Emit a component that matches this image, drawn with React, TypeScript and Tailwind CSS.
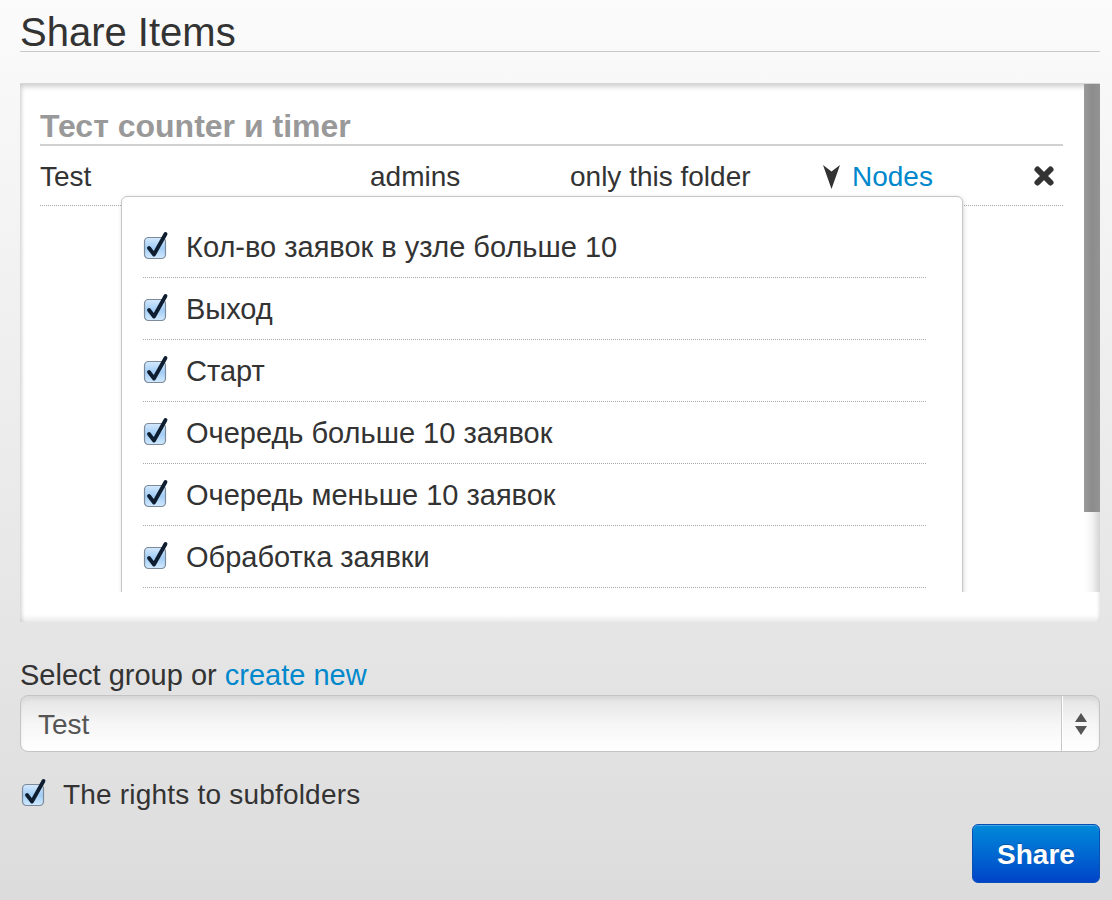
import React from "react";

const font = { fontFamily: '"Liberation Sans", Arial, sans-serif' };

function Check({ className = "" }: { className?: string }) {
  return (
    <svg width="27" height="31" viewBox="0 0 27 31" className={className}>
      <defs>
        <linearGradient id="cbg" x1="0" y1="0" x2="0" y2="1">
          <stop offset="0" stopColor="#d4e9fd" />
          <stop offset="0.5" stopColor="#a2cdf6" />
          <stop offset="1" stopColor="#d2eaff" />
        </linearGradient>
      </defs>
      <rect x="1.5" y="7.5" width="21" height="21" rx="4" fill="url(#cbg)" stroke="#7d8a99" strokeWidth="1.2" />
      <path d="M6 18 L11 24.5 L22.5 4" fill="none" stroke="#0e1d30" strokeWidth="3.8" strokeLinecap="round" strokeLinejoin="round" />
    </svg>
  );
}

const items = [
  "Кол-во заявок в узле больше 10",
  "Выход",
  "Старт",
  "Очередь больше 10 заявок",
  "Очередь меньше 10 заявок",
  "Обработка заявки",
];

export default function App() {
  return (
    <div
      className="w-[1112px] min-h-[900px] bg-gradient-to-b from-[#fbfbfb] to-[#dcdcdc] px-[20px] text-[#333]"
      style={font}
    >
      <div className="w-[1080px] pt-[14px] text-[40px] leading-[37px] text-[#333] border-b border-[#c8c8c8]">
        Share Items
      </div>

      {/* Panel */}
      <div className="mt-[31px] w-[1080px] h-[539px] bg-white relative flex flex-col shadow-[inset_1px_3px_5px_rgba(0,0,0,0.18),inset_0_-4px_5px_rgba(0,0,0,0.08)] border-t border-[#d6d6d6]">
        <div className="h-[508px] flex relative overflow-hidden">
          <div className="flex-1 pl-[20px] pr-[21px] pt-[23px]">
            <div className="text-[32px] leading-[36px] pt-[1px] font-bold text-[#999] border-b-2 border-[#d0d0d0]">
              Тест counter и timer
            </div>
            <div className="h-[60px] pt-[3px] flex items-center text-[28px] border-b border-dotted border-[#aaa]">
              <div className="w-[330px]">Test</div>
              <div className="w-[200px]">admins</div>
              <div className="w-[252px]">only this folder</div>
              <div className="flex-1 flex items-center">
                <svg width="17" height="24" viewBox="0 0 17 24" className="ml-[1px] mr-[12px]">
                  <polygon points="0,0 8.5,6.5 17,0 8.5,24" fill="#333" />
                </svg>
                <span className="text-[#0088cc]">Nodes</span>
              </div>
              <svg width="22" height="22" viewBox="0 0 22 22" className="mr-[8px] -mt-[2px]">
                <path d="M4.5 4.5 L17.5 17.5 M17.5 4.5 L4.5 17.5" stroke="#333" strokeWidth="6" strokeLinecap="round" />
              </svg>
            </div>
          </div>
          {/* scrollbar */}
          <div className="w-[16px] flex flex-col">
            <div className="h-[428px] bg-gradient-to-r from-[#9a9a9a] via-[#8c8c8c] to-[#939393]" />
            <div className="flex-1 bg-gradient-to-r from-[#ffffff] via-[#f4f4f4] to-[#d4d4d4]" />
          </div>

          {/* dropdown */}
          <div className="absolute left-[101px] top-[112px] w-[842px] h-[600px] bg-white border border-[#c6c6c6] rounded-[6px] shadow-[1px_1px_4px_rgba(0,0,0,0.15)] pt-[19px] pl-[21px] pr-[36px]">
            {items.map((t) => (
              <div key={t} className="h-[62px] pt-[3px] flex items-center border-b border-dotted border-[#aaa] text-[29px]">
                <Check className="mr-[16px] -mt-[6px]" />
                <span>{t}</span>
              </div>
            ))}
          </div>
        </div>
        <div className="flex-1" />
      </div>

      <div className="mt-[37px] text-[29px] leading-[32px]">
        Select group or <span className="text-[#0088cc]">create new</span>
      </div>

      <div className="mt-[4px] w-[1080px] h-[57px] rounded-[8px] border-[1.5px] border-[#c4c4c4] flex bg-gradient-to-b from-[#e3e3e3] via-[#f6f6f6] to-[#ffffff] shadow-[inset_0_3px_4px_rgba(0,0,0,0.06)]">
        <div className="flex-1 pl-[17px] pt-[3px] flex items-center text-[28px] text-[#555]">Test</div>
        <div className="w-[38px] border-l border-[#c8c8c8] flex flex-col items-center justify-center gap-[4px] shadow-[inset_1px_0_0_#fff]">
          <svg width="12" height="9" viewBox="0 0 12 9">
            <polygon points="6,0 12,9 0,9" fill="#555" />
          </svg>
          <svg width="12" height="9" viewBox="0 0 12 9">
            <polygon points="0,0 12,0 6,9" fill="#555" />
          </svg>
        </div>
      </div>

      <div className="mt-[27px] h-[32px] flex items-center text-[28px]">
        <Check className="ml-[1px] mr-[15px] -mt-[6px]" />
        <span className="tracking-[0.2px]">The rights to subfolders</span>
      </div>

      <div className="mt-[13px] flex justify-end w-[1080px]">
        <button className="w-[128px] h-[59px] pt-[2px] rounded-[6px] border border-[#0a4fb5] bg-gradient-to-b from-[#0089d9] to-[#0043c8] text-white text-[28px] font-bold [text-shadow:0_-1px_0_rgba(0,0,0,0.25)] shadow-[inset_0_1px_0_rgba(255,255,255,0.25)]">
          Share
        </button>
      </div>
    </div>
  );
}
